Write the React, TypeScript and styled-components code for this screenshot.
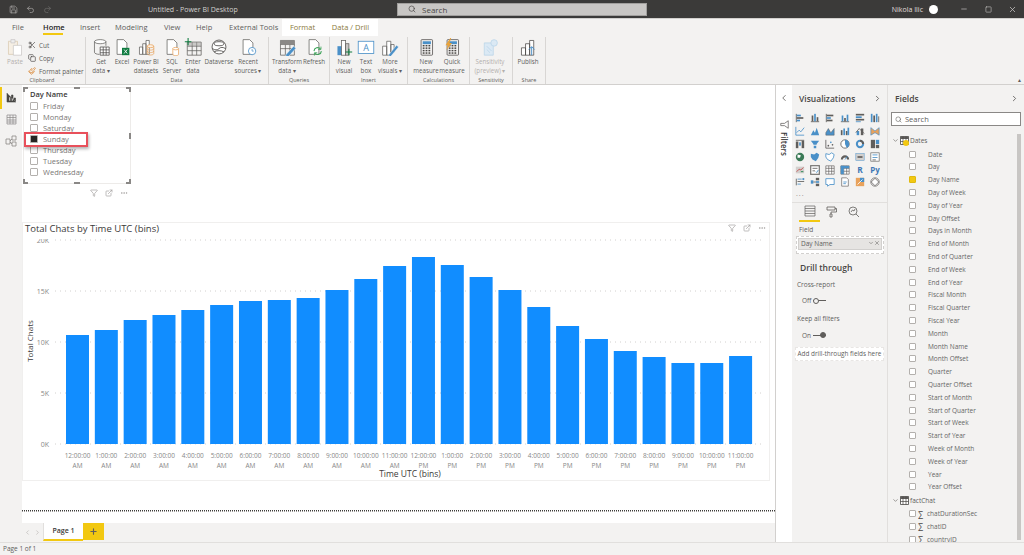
import React from "react";
import styled, { createGlobalStyle } from "styled-components";
import { ChevronDown, ChevronLeft, ChevronRight, Search, X, Filter, Scissors, Copy, Paintbrush, Save, Undo2, Redo2, Minus, Square, ExternalLink, MoreHorizontal, Plus } from "lucide-react";

const Global = createGlobalStyle`
  html, body { margin: 0; padding: 0; width: 1024px; height: 555px; overflow: hidden; }
  body { font-family: "Open Sans", "Liberation Sans", sans-serif; color: #605e5c; }
  * { box-sizing: border-box; }
`;

const Page = styled.div`
  width: 1024px;
  height: 555px;
  display: flex;
  flex-direction: column;
  background: #f3f2f1;
`;

/* title bar */
const TitleBar = styled.div`
  height: 18px;
  background: #3b3a39;
  display: flex;
  align-items: center;
  color: #d2d0ce;
  font-size: 7px;
  flex: none;
`;
const QuickTools = styled.div`
  display: flex;
  align-items: center;
  gap: 8px;
  width: 148px;
  padding-left: 9px;
  color: #a19f9d;
`;
const AppName = styled.div`
  width: 249px;
`;
const TitleSearch = styled.div`
  width: 250px;
  height: 13px;
  background: #c8c6c4;
  border: 1px solid #a19f9d;
  display: flex;
  align-items: center;
  gap: 6px;
  padding-left: 10px;
  color: #484644;
  font-size: 8px;
`;
const UserBox = styled.div`
  margin-left: auto;
  display: flex;
  align-items: center;
  color: #e1dfdd;
`;
const Avatar = styled.div`
  width: 9px;
  height: 9px;
  border-radius: 50%;
  background: #fff;
  margin: 0 14px 0 6px;
`;
const WinBtn = styled.div`
  width: 24px;
  display: flex;
  justify-content: center;
  color: #c8c6c4;
`;

/* ribbon */
const TabRow = styled.div`
  height: 18px;
  display: flex;
  flex: none;
  padding-left: 12px;
  border-top: 1px solid #d2d0ce;
`;
const RibbonTab = styled.div<{ $active?: boolean; $ctx?: boolean; $mr: number; $w: number }>`
  width: ${(p) => p.$w}px;
  margin-right: ${(p) => p.$mr}px;
  font-size: 7.5px;
  line-height: 17px;
  text-align: center;
  white-space: nowrap;
  background: ${(p) => (p.$ctx ? "#fff" : "transparent")};
  color: ${(p) => (p.$ctx ? "#8a7a3c" : p.$active ? "#252423" : "#605e5c")};
  font-weight: ${(p) => (p.$active ? 600 : 400)};
  border-bottom: ${(p) => (p.$active ? "2px solid #f2c811" : "none")};
  height: ${(p) => (p.$active ? "16px" : "17px")};
`;
const Ribbon = styled.div`
  height: 49px;
  display: flex;
  flex: none;
  border-bottom: 1px solid #d2d0ce;
`;
const Group = styled.div<{ $w: number; $pad?: number }>`
  width: ${(p) => p.$w}px;
  border-right: 1px solid #d8d6d4;
  margin: 1px 0 0;
  display: flex;
  flex-direction: column;
  padding-left: ${(p) => p.$pad ?? 4}px;
  flex: none;
`;
const GroupBody = styled.div`
  display: flex;
  flex: 1;
`;
const GroupName = styled.div`
  font-size: 5.5px;
  line-height: 8px;
  text-align: center;
  color: #605e5c;
  margin-left: -4px;
`;
const Cmd = styled.div<{ $w: number; $off?: boolean }>`
  width: ${(p) => p.$w}px;
  display: flex;
  flex-direction: column;
  align-items: center;
  font-size: 6.2px;
  line-height: 8.6px;
  text-align: center;
  white-space: nowrap;
  color: ${(p) => (p.$off ? "#b3b0ad" : "#605e5c")};
  svg { flex: none; }
`;
const CmdIcon = styled.div`
  height: 20px;
  display: flex;
  align-items: center;
  margin-bottom: 1px;
`;
const SmallCmds = styled.div`
  display: flex;
  flex-direction: column;
  gap: 3px;
  padding-top: 3px;
  font-size: 6.4px;
  color: #605e5c;
  margin-left: 1px;
`;
const SmallCmd = styled.div`
  display: flex;
  align-items: center;
  gap: 3px;
  height: 10px;
  white-space: nowrap;
  svg { flex: none; }
`;
const Collapse = styled.div`
  margin-left: auto;
  align-self: flex-end;
  padding: 0 2px 1px 0;
  font-size: 5px;
  color: #605e5c;
`;

/* main */
const Main = styled.div`
  flex: 1;
  display: flex;
  min-height: 0;
`;
const Rail = styled.div`
  width: 22px;
  flex: none;
  padding-top: 2px;
  display: flex;
  flex-direction: column;
`;
const RailBtn = styled.div<{ $active?: boolean }>`
  height: 21.5px;
  display: flex;
  align-items: center;
  justify-content: center;
  border-left: 2px solid ${(p) => (p.$active ? "#f2c811" : "transparent")};
  padding-right: 2px;
`;
const Canvas = styled.div`
  width: 753px;
  flex: none;
  display: flex;
  flex-direction: column;
  background: #fff;
`;
const Sheet = styled.div`
  flex: 1;
  background: #fff;
  padding-top: 2px;
`;
const SlicerFrame = styled.div`
  position: relative;
  width: 108px;
  height: 97px;
  margin-left: 1px;
  padding: 1px 6px;
  border: 1px solid #edebe9;
`;
const SlicerTitle = styled.div`
  font-size: 7.5px;
  font-weight: 600;
  color: #3b3a39;
  line-height: 11px;
`;
const SlicerRow = styled.div`
  height: 11.1px;
  display: flex;
  align-items: center;
  gap: 5px;
  font-size: 7.5px;
  color: #7a7876;
`;
const Check = styled.div<{ $on?: boolean; $size?: number }>`
  width: ${(p) => p.$size ?? 8}px;
  height: ${(p) => p.$size ?? 8}px;
  flex: none;
  border: 1px solid #b3b0ad;
  border-radius: 1px;
  background: ${(p) => (p.$on ? "#252423" : "#fff")};
`;
const Handle = styled.div<{ $x: string; $y: string; $w: number; $h: number }>`
  position: absolute;
  left: ${(p) => p.$x};
  top: ${(p) => p.$y};
  width: ${(p) => p.$w}px;
  height: ${(p) => p.$h}px;
  background: #8a8886;
`;
const Callout = styled.div`
  position: absolute;
  left: 0;
  top: 44px;
  width: 64px;
  height: 15px;
  border: 2px solid #e8505b;
  box-shadow: 1px 2px 3px rgba(0, 0, 0, 0.3);
`;
const VisualTools = styled.div`
  height: 18px;
  width: 108px;
  margin-left: 1px;
  display: flex;
  align-items: center;
  justify-content: flex-end;
  gap: 7px;
  padding-right: 3px;
  color: #a19f9d;
`;
const ChartCard = styled.div`
  margin-top: 20px;
  width: 748px;
  height: 259px;
  border: 1px solid #f0efee;
  position: relative;
`;
const ChartTitle = styled.div`
  font-size: 9.5px;
  line-height: 11px;
  color: #3b3a39;
  padding: 0 0 0 2px;
  height: 16px;
`;
const ChartTools = styled.div`
  position: absolute;
  right: 3px;
  top: 1px;
  display: flex;
  gap: 7px;
  align-items: center;
  color: #a19f9d;
`;
const DottedLine = styled.div`
  margin: 29px 0 0;
  border-top: 1px dotted #3b3a39;
  border-bottom: 1px dotted #a19f9d;
  height: 2px;
`;
const PageStrip = styled.div`
  height: 19px;
  flex: none;
  background: #f3f2f1;
  display: flex;
  align-items: flex-start;
  padding-left: 1px;
  color: #b3b0ad;
`;
const PageNav = styled.div`
  width: 20px;
  height: 18px;
  display: flex;
  align-items: center;
  gap: 3px;
  padding-left: 1px;
`;
const PageTab = styled.div`
  width: 40px;
  height: 18px;
  background: #fff;
  border-bottom: 2px solid #f2c811;
  border-left: 1px solid #e1dfdd;
  font-size: 7px;
  font-weight: 600;
  color: #3b3a39;
  text-align: center;
  line-height: 16px;
`;
const AddPage = styled.div`
  width: 21px;
  height: 17px;
  background: #f2c811;
  display: flex;
  align-items: center;
  justify-content: center;
  color: #605e5c;
`;

/* filters rail */
const FilterRail = styled.div`
  width: 17px;
  flex: none;
  background: #fff;
  border-left: 1px solid #d2d0ce;
  display: flex;
  flex-direction: column;
  align-items: center;
  padding-top: 8px;
  color: #605e5c;
`;
const FilterIcon = styled.svg`
  margin-top: 17px;
  flex: none;
`;
const FiltersLabel = styled.div`
  writing-mode: vertical-rl;
  font-size: 8px;
  font-weight: 600;
  color: #3b3a39;
  margin-top: 3px;
`;

/* visualizations */
const VizPane = styled.div`
  width: 96px;
  flex: none;
  border-right: 1px solid #e1dfdd;
  display: flex;
  flex-direction: column;
`;
const PaneHead = styled.div`
  height: 27px;
  flex: none;
  padding: 0 5px 0 7px;
  display: flex;
  align-items: center;
  justify-content: space-between;
  font-size: 8.5px;
  font-weight: 600;
  color: #484644;
`;
const VizGrid = styled.div`
  display: grid;
  grid-template-columns: repeat(6, 14.9px);
  grid-auto-rows: 12.8px;
  padding-left: 1px;
  justify-items: center;
  align-items: center;
`;
const VizDots = styled.div`
  font-size: 7px;
  line-height: 6px;
  letter-spacing: 1px;
  padding: 2px 0 0 4px;
  height: 14px;
  border-bottom: 1px solid #e1dfdd;
  color: #8a8886;
`;
const VizTabs = styled.div`
  display: flex;
  height: 19px;
  padding-left: 7px;
  gap: 1px;
`;
const VizTab = styled.div<{ $active?: boolean }>`
  width: 21px;
  display: flex;
  align-items: center;
  justify-content: center;
  border-bottom: ${(p) => (p.$active ? "2px solid #f2c811" : "none")};
`;
const WellLabel = styled.div`
  font-size: 6.5px;
  padding: 3px 0 0 7px;
  line-height: 9px;
`;
const Well = styled.div`
  margin: 2px 3px 0 4px;
  padding: 1px;
  border: 1px dashed #d2d0ce;
  background: #fff;
  height: 18px;
`;
const Chip = styled.div`
  height: 12px;
  background: #e6e4e2;
  border: 1px solid #d2d0ce;
  font-size: 6.5px;
  line-height: 10px;
  padding: 0 1px 0 2px;
  display: flex;
  align-items: center;
  justify-content: space-between;
`;
const DrillHead = styled.div`
  font-size: 8.5px;
  font-weight: 600;
  color: #484644;
  padding: 8px 0 0 8px;
  line-height: 12px;
`;
const Caption = styled.div<{ $top: number }>`
  font-size: 6.5px;
  line-height: 9px;
  padding: ${(p) => p.$top}px 0 0 5px;
`;
const ToggleRow = styled.div`
  display: flex;
  align-items: center;
  gap: 2px;
  font-size: 6.5px;
  padding: 7.5px 0 0 10px;
  line-height: 9px;
`;
const Toggle = styled.div<{ $on?: boolean }>`
  width: 13px;
  height: 5px;
  display: flex;
  align-items: center;
  justify-content: ${(p) => (p.$on ? "flex-end" : "flex-start")};
  background: linear-gradient(#605e5c, #605e5c) center / 100% 1px no-repeat;
  span {
    width: 6px;
    height: 6px;
    flex: none;
    border-radius: 50%;
    border: 1px solid #605e5c;
    background: ${(p) => (p.$on ? "#605e5c" : "#f3f2f1")};
  }
`;
const DrillBtn = styled.div`
  margin: 7px 3px 0 3px;
  height: 14px;
  background: #fff;
  border: 1px dashed #e8e6e4;
  font-size: 6.4px;
  line-height: 12px;
  text-align: center;
  white-space: nowrap;
`;

/* fields */
const FieldsPane = styled.div`
  flex: 1;
  display: flex;
  flex-direction: column;
  min-width: 0;
  position: relative;
`;
const FieldSearch = styled.div`
  margin: 0 3px;
  height: 14px;
  flex: none;
  background: #fff;
  border: 1px solid #8a8886;
  display: flex;
  align-items: center;
  gap: 3px;
  padding-left: 3px;
  font-size: 7.5px;
`;
const Tree = styled.div`
  padding-top: 8px;
  height: 416px;
  overflow: hidden;
`;
const TreeHead = styled.div`
  height: 13.8px;
  display: flex;
  align-items: center;
  gap: 1px;
  padding-left: 4px;
  font-size: 6.5px;
  position: relative;
`;
const TreeItem = styled.div`
  height: 12.8px;
  display: flex;
  align-items: center;
  padding-left: 21px;
  font-size: 6.5px;
  white-space: nowrap;
  color: #666;
`;
const ItemLabel = styled.span<{ $sigma?: boolean }>`
  margin-left: ${(p) => (p.$sigma ? 2 : 12)}px;
`;
const Sigma = styled.span`
  font-size: 8px;
  line-height: 8px;
  margin-left: 2px;
  width: 7px;
  color: #484644;
`;
const ScrollThumb = styled.div`
  position: absolute;
  right: 3px;
  top: 49px;
  width: 4px;
  height: 406px;
  background: #c8c6c4;
`;
const YellowDot = styled.div`
  position: absolute;
  left: 15px;
  top: 6px;
  width: 6px;
  height: 6px;
  border-radius: 50%;
  background: #f2c811;
`;
const StatusBar = styled.div`
  height: 13px;
  flex: none;
  border-top: 1px solid #e1dfdd;
  font-size: 6.5px;
  line-height: 12px;
  padding-left: 3px;
`;

const G = "#605e5c";
const B = "#4a90c8";
const O = "#e8a25c";

const RibbonGlyph: React.FC<{ kind: string }> = ({ kind }) => {
  const doc = <path d="M5 2h8l4 4v14H5z" fill="#fff" stroke={G} strokeWidth="0.9" />;
  const inner = () => {
    switch (kind) {
      case "paste":
        return (
          <g strokeWidth="0.9" fill="#f6efe4" stroke="#d8c8ae">
            <path d="M3 4h11v16H3z" />
            <path d="M6 2h5v4H6z" fill="#eee" stroke="#c8c6c4" />
            <path d="M9 9h10v12H9z" fill="#fff" stroke="#c8c6c4" />
          </g>
        );
      case "getdata":
        return (
          <g strokeWidth="0.9" stroke={G} fill="#fff">
            <ellipse cx="10" cy="4.5" rx="7" ry="2.5" />
            <path d="M3 4.5v13c0 1.5 3 2.5 6 2.5M17 4.5v5" fill="none" />
            <path d="M10 11h11v10H10zM10 14.5h11M10 18h11M13.7 11v10M17.3 11v10" stroke="#484644" fill="#fff" />
          </g>
        );
      case "excel":
        return (
          <g>
            {doc}
            <rect x="11" y="12" width="9" height="9" fill="#107c41" />
            <path d="M13.5 14l4 5M17.5 14l-4 5" stroke="#fff" strokeWidth="1" />
          </g>
        );
      case "datasets":
        return (
          <g strokeWidth="0.9" fill="#fff" stroke={G}>
            <path d="M3 11h4v9H3zM7 7h4v13H7zM11 3h4v17h-4z" />
            <g stroke={O}>
              <ellipse cx="16.5" cy="10" rx="4" ry="1.8" fill="#fdf1e3" />
              <path d="M12.5 10v9c0 1 1.8 1.8 4 1.8s4-.8 4-1.8v-9M12.5 13c0 1 1.8 1.8 4 1.8s4-.8 4-1.8M12.5 16c0 1 1.8 1.8 4 1.8s4-.8 4-1.8" fill="none" />
            </g>
          </g>
        );
      case "sql":
        return (
          <g>
            {doc}
            <g stroke={O} strokeWidth="0.9" fill="#fff">
              <path d="M12 13v7c0 1 1.6 1.5 3.5 1.5S19 21 19 20v-7" />
              <ellipse cx="15.5" cy="13" rx="3.5" ry="1.5" />
            </g>
          </g>
        );
      case "enter":
        return (
          <g strokeWidth="0.9" fill="none">
            <path d="M4 5h17v16H4zM4 10h17M4 15.500h17M10 5v16M15.500 5v16" stroke={G} />
            <path d="M4 5h17v5H4z" fill="#a19f9d" opacity=".5" />
            <path d="M5 0v9M1 4.500h8" stroke="#107c41" strokeWidth="1.3" />
          </g>
        );
      case "dataverse":
        return (
          <g strokeWidth="1" stroke="#484644" fill="#fff">
            <ellipse cx="11" cy="11" rx="8.500" ry="8.500" />
            <ellipse cx="11" cy="7" rx="6" ry="2.500" />
            <path d="M3 13c3 2 6 2 8 0s5-2 8 0M5 17c3-2 9-2 12 0" fill="none" />
          </g>
        );
      case "recent":
        return (
          <g>
            {doc}
            <circle cx="16" cy="16" r="4.500" fill="#fff" stroke={B} />
            <path d="M16 13.500V16h2" stroke={B} fill="none" strokeWidth="0.9" />
          </g>
        );
      case "transform":
        return (
          <g fill="none" strokeWidth="0.9">
            <path d="M3 3h17v18H3zM3 8h17M3 13h17M9 8v13M14.500 8v13" stroke={G} />
            <path d="M3 3h17v5H3z" fill="#8a8886" />
            <path d="M10 20l9-10 3 2.500-9 10-4 1z" fill={B} stroke="#fff" strokeWidth="0.6" />
          </g>
        );
      case "refresh":
        return (
          <g>
            {doc}
            <path d="M11 16a4.500 4.500 0 0 1 8-2.500M20 16a4.500 4.500 0 0 1-8 2.500" stroke="#3fa45b" strokeWidth="1.3" fill="none" />
            <path d="M19.500 10.500v3.500h-3.500M11.500 21.500V18H15" stroke="#3fa45b" strokeWidth="1" fill="none" />
          </g>
        );
      case "newvisual":
        return (
          <g strokeWidth="0.9">
            <rect x="3" y="10" width="5" height="11" fill={B} />
            <rect x="8" y="3" width="5" height="18" fill="#fff" stroke={G} />
            <rect x="13" y="7" width="4" height="14" fill="#c8c6c4" stroke={G} />
            <path d="M17 13v8M13 17h8" stroke="#107c41" strokeWidth="1.3" />
          </g>
        );
      case "textbox":
        return (
          <g>
            <rect x="1.500" y="4" width="19" height="15" fill="#fff" stroke={B} />
            <text x="11" y="16" fontSize="11" textAnchor="middle" fill={B} fontFamily="Open Sans">A</text>
          </g>
        );
      case "morevisuals":
        return (
          <g strokeWidth="0.9" stroke={G} fill="#fff">
            <path d="M2 10h5v11H2zM7 4h5v17H7zM12 8h4v9h-4z" />
            <path d="M9 21l10-12 2.500 2L11.500 23z" fill={B} stroke="#fff" strokeWidth="0.5" />
          </g>
        );
      case "newmeasure":
      case "quickmeasure":
        return (
          <g>
            <rect x="5" y="2" width="14" height="19" rx="1" fill="#f3f2f1" stroke="#484644" strokeWidth="0.9" />
            <rect x="7" y="4" width="10" height="3.500" fill={B} />
            <g fill="#484644">
              {[9, 12, 15, 18].flatMap((y) =>
                [7, 10.500, 14].map((x) => <rect key={`${x}-${y}`} x={x} y={y - 0.500} width="2.200" height="1.800" />)
              )}
            </g>
            {kind === "quickmeasure" && <path d="M9 0L3 9h3l-2 6 7-9H8l2-6z" fill="#e8a33c" />}
          </g>
        );
      case "sensitivity":
        return (
          <g fill="#dbe9f4" stroke="#b7d3e8" strokeWidth="0.9">
            <path d="M4 6h11v15H4z" />
            <circle cx="16" cy="6" r="4" />
            <path d="M7 10l6 6M7 14l4 4" fill="none" />
          </g>
        );
      default:
        return (
          <g strokeWidth="0.9" stroke="#484644" fill="#fff">
            <path d="M3 12h5v9H3zM8 7h5v14H8zM13 3h5v18h-5z" />
            <path d="M15.500 21V11M12 14l3.500-3.500L19 14" stroke={B} strokeWidth="1.2" fill="none" />
          </g>
        );
    }
  };
  return (
    <svg width="18" height="18" viewBox="0 0 22 22">
      {inner()}
    </svg>
  );
};

const vizKinds = [
  "hstack", "vstack", "hbar", "vbar", "hfull", "vfull",
  "line", "area", "lines", "combo", "combo2", "ribbon",
  "water", "funnel", "scatter", "pie", "donut", "tree",
  "map", "filled", "shape", "gauge", "card", "multi",
  "kpi", "slicer", "table", "matrix", "R", "Py",
  "key", "decomp", "qa", "para", "paginated", "diamond",
];

const VizGlyph: React.FC<{ kind: string }> = ({ kind }) => {
  const bars = (items: number[][], fill = G) =>
    items.map((r, i) => <rect key={i} x={r[0]} y={r[1]} width={r[2]} height={r[3]} fill={r[4] ? B : fill} />);
  const shapes: Record<string, React.ReactNode> = {
    hstack: bars([[1, 1, 1, 10], [2, 2, 5, 2, 1], [2, 5, 8, 2], [2, 8, 4, 2, 1]]),
    vstack: bars([[1, 10, 10, 1], [2, 3, 2, 7], [5, 1, 2, 9, 1], [8, 5, 2, 5]]),
    hbar: bars([[1, 1, 1, 10], [2, 2, 8, 2], [2, 5, 5, 2, 1], [2, 8, 7, 2]]),
    vbar: bars([[1, 10, 10, 1], [2, 3, 2, 7, 1], [5, 6, 2, 4], [8, 2, 2, 8, 1]]),
    hfull: bars([[1, 1, 10, 2], [1, 4, 7, 2, 1], [1, 7, 10, 2], [1, 10, 6, 1, 1]]),
    vfull: bars([[1, 1, 2, 10, 1], [4, 3, 2, 8], [7, 1, 2, 10, 1], [10, 4, 1, 7]]),
    line: <path d="M1 1v10h10M2 8l3-3 2 2 4-5" fill="none" stroke={B} strokeWidth="1" />,
    area: <path d="M1 11l3-6 2 3 2-6 3 9z" fill={B} />,
    lines: <path d="M1 8l3-5 3 5 4-5v8H1z" fill={B} stroke={G} strokeWidth=".6" />,
    combo: <g>{bars([[1, 5, 2, 6], [4, 3, 2, 8, 1], [7, 6, 2, 5], [9, 2, 2, 9, 1]])}</g>,
    combo2: <g>{bars([[2, 6, 3, 5, 1], [7, 3, 3, 8]])}<path d="M1 8l4-5 6 6" stroke={G} fill="none" /></g>,
    ribbon: <path d="M1 2l5 4 5-4v9l-5-3-5 3z" fill="#e8a25c" stroke={B} strokeWidth=".8" />,
    water: bars([[1, 1, 10, 1], [1, 3, 3, 8], [5, 4, 2, 4, 1], [8, 2, 3, 9]]),
    funnel: <path d="M1 2h10L8 6v1H4V6zM4.500 8h3v3h-3z" fill={B} />,
    scatter: <g fill={G}><path d="M1 1v10h10" stroke={G} fill="none" /><circle cx="4" cy="8" r="1" /><circle cx="7" cy="4" r="1" fill={B} /><circle cx="9" cy="7" r="1" /></g>,
    pie: <g><circle cx="6" cy="6" r="5" fill="#fff" stroke={G} /><path d="M6 6V1a5 5 0 0 1 2 9.600z" fill={B} /></g>,
    donut: <g><circle cx="6" cy="6" r="3.800" fill="none" stroke={B} strokeWidth="2.400" /><path d="M6 2.200a3.800 3.800 0 0 1 3.800 3.800" stroke={G} strokeWidth="2.400" fill="none" /></g>,
    tree: bars([[1, 1, 5, 10], [7, 1, 4, 5, 1], [7, 7, 4, 4]]),
    map: <g><circle cx="6" cy="6" r="5" fill="#3b7a57" /><path d="M3 3l4 1-1 3-3 0z" fill="#fff" /></g>,
    filled: <path d="M1 2l4 1 3-2 3 2-1 4-3 4-4-2-2-3z" fill={B} />,
    shape: <path d="M1 2l4 1 3-2 3 2-1 4-3 4-4-2-2-3z" fill="#fff" stroke={B} />,
    gauge: <g><path d="M1 9a5 5 0 0 1 10 0h-2.500a2.500 2.500 0 0 0-5 0z" fill={G} /><path d="M6 9l3-4" stroke={B} /></g>,
    card: <g><rect x="1" y="2" width="10" height="8" fill="#d2d0ce" stroke={B} strokeWidth=".6" /><rect x="3" y="5" width="6" height="2" fill={G} /></g>,
    multi: <g><rect x="1" y="1" width="10" height="10" fill="#fff" stroke={G} strokeWidth=".8" />{bars([[3, 3, 6, 1, 1], [3, 6, 6, 1, 1], [3, 9, 4, 1]])}</g>,
    kpi: <g><rect x="1" y="2" width="10" height="8" fill="#d2d0ce" /><path d="M2 8l3-3 2 1 3-3" stroke="#c43e3e" fill="none" /><path d="M7 8h3" stroke="#107c41" /></g>,
    slicer: <g><rect x="-1" y="-1" width="14" height="14" fill="#a19f9d" /><rect x="1" y="1" width="10" height="10" fill="#fff" stroke={G} /><path d="M3 4h6M3 7h3" stroke={G} /><path d="M7 8l1 1 2-3" stroke={B} fill="none" /></g>,
    table: <path d="M1 1h10v10H1zM1 4h10M1 7.500h10M4.500 1v10M8 1v10" fill="#fff" stroke={G} strokeWidth=".8" />,
    matrix: <g><path d="M1 1h10v10H1zM1 4h10M1 7.500h10M4.500 1v10M8 1v10" fill="#fff" stroke={G} strokeWidth=".8" /><path d="M1 1h10v3H1z" fill={B} /><path d="M1 1h3.500v10H1z" fill={B} /></g>,
    R: <text x="6" y="10" fontSize="10" fontWeight="700" textAnchor="middle" fill="#3f78b5" fontFamily="Open Sans">R</text>,
    Py: <text x="6" y="10" fontSize="9.500" fontWeight="700" textAnchor="middle" fill="#3f78b5" fontFamily="Open Sans">Py</text>,
    key: <g>{bars([[1, 2, 1, 8], [3, 2, 5, 1, 1], [3, 5, 8, 1], [3, 8, 4, 1, 1]])}<circle cx="10" cy="2.500" r="1.300" fill={B} /></g>,
    decomp: <g>{bars([[1, 4, 3, 4, 1], [7, 1, 4, 3], [7, 5, 4, 2, 1], [7, 8, 4, 3]])}<path d="M4 6h3" stroke={G} /></g>,
    qa: <path d="M1 2h10v7H6l-3 2V9H1z" fill="#fff" stroke={B} />,
    para: <g><path d="M2 1h6l2 2v8H2z" fill="#fff" stroke={G} strokeWidth=".8" /><path d="M4 6h4M4 8h3" stroke={B} /></g>,
    paginated: <g><rect x="1" y="1" width="10" height="10" fill="#e8a25c" /><path d="M6 1h5v5H6z" fill={B} /><path d="M3 9l6-6" stroke="#fff" /></g>,
    diamond: <g fill="#fff" stroke="#484644" strokeWidth=".8"><circle cx="6" cy="6" r="5" /><path d="M6 1.500L10.500 6 6 10.500 1.500 6z" /></g>,
  };
  return (
    <svg width="10" height="10" viewBox="0 0 12 12">
      {shapes[kind]}
    </svg>
  );
};

const TableIcon: React.FC = () => (
  <svg width="9" height="9" viewBox="0 0 9 9">
    <path d="M.5.500h8v8h-8z" fill="#fff" stroke="#484644" strokeWidth=".8" />
    <path d="M.5.500h8V3h-8z" fill="#605e5c" />
    <path d="M.5 5.500h8M3 .500v8M6 .500v8" stroke="#484644" strokeWidth=".7" />
  </svg>
);

const values = [335, 330, 320, 315, 310, 305, 301, 300, 298, 290, 279, 266, 257, 265, 277, 290, 307, 326, 339, 351, 357, 363, 363, 356];
const hours = ["12", "1", "2", "3", "4", "5", "6", "7", "8", "9", "10", "11"];
const xLabels = [...hours.map((h) => [`${h}:00:00`, "AM"]), ...hours.map((h) => [`${h}:00:00`, "PM"])];
const days = ["Friday", "Monday", "Saturday", "Sunday", "Thursday", "Tuesday", "Wednesday"];
const dateFields = [
  "Date", "Day", "Day Name", "Day of Week", "Day of Year", "Day Offset", "Days in Month", "End of Month", "End of Quarter",
  "End of Week", "End of Year", "Fiscal Month", "Fiscal Quarter", "Fiscal Year", "Month", "Month Name", "Month Offset",
  "Quarter", "Quarter Offset", "Start of Month", "Start of Quarter", "Start of Week", "Start of Year", "Week of Month",
  "Week of Year", "Year", "Year Offset",
];

const Chart: React.FC = () => (
  <svg width="746" height="241" viewBox="23 239 746 241">
    {[
      ["20K", 240],
      ["15K", 291],
      ["10K", 342],
      ["5K", 393],
      ["0K", 444],
    ].map(([label, y]) => (
      <g key={label}>
        <line x1="55" x2="765" y1={y} y2={y} stroke="#d2d0ce" strokeWidth="1" strokeDasharray="1 4" />
        <text x="49" y={Number(y) + 3} textAnchor="end" fontSize="7" fill="#888">{label}</text>
      </g>
    ))}
    {values.map((top, i) => (
      <rect key={i} x={66 + i * 28.83} y={top} width={23} height={444 - top} fill="#118dff" />
    ))}
    {xLabels.map(([a, b], i) => (
      <text key={i} textAnchor="middle" fontSize="6.500" fill="#888">
        <tspan x={77.500 + i * 28.83} y="458">{a}</tspan>
        <tspan x={77.500 + i * 28.83} y="468">{b}</tspan>
      </text>
    ))}
    <text x="410" y="477" textAnchor="middle" fontSize="8.500" fill="#3b3a39">Time UTC (bins)</text>
    <text transform="translate(33 341) rotate(-90)" textAnchor="middle" fontSize="8" fill="#3b3a39">Total Chats</text>
  </svg>
);

export default function App() {
  return (
    <Page>
      <Global />
      <TitleBar>
        <QuickTools>
          <Save size={9} />
          <Undo2 size={9} />
          <Redo2 size={9} color="#6a6867" />
        </QuickTools>
        <AppName>Untitled - Power BI Desktop</AppName>
        <TitleSearch>
          <Search size={8} />
          Search
        </TitleSearch>
        <UserBox>
          Nikola Ilic
          <Avatar />
          <WinBtn><Minus size={8} /></WinBtn>
          <WinBtn><Square size={7} /></WinBtn>
          <WinBtn><X size={9} /></WinBtn>
        </UserBox>
      </TitleBar>
      <TabRow>
        <RibbonTab $w={11} $mr={20}>File</RibbonTab>
        <RibbonTab $w={20} $mr={17} $active>Home</RibbonTab>
        <RibbonTab $w={18} $mr={17}>Insert</RibbonTab>
        <RibbonTab $w={32} $mr={17}>Modeling</RibbonTab>
        <RibbonTab $w={16} $mr={16}>View</RibbonTab>
        <RibbonTab $w={16} $mr={17}>Help</RibbonTab>
        <RibbonTab $w={44} $mr={9}>External Tools</RibbonTab>
        <RibbonTab $w={41} $mr={0} $ctx>Format</RibbonTab>
        <RibbonTab $w={55} $mr={0} $ctx>Data / Drill</RibbonTab>
      </TabRow>
      <Ribbon>
        <Group $w={86} $pad={3}>
          <GroupBody>
            <Cmd $w={24} $off>
              <CmdIcon><RibbonGlyph kind="paste" /></CmdIcon>
              Paste
            </Cmd>
            <SmallCmds>
              <SmallCmd><Scissors size={8} color="#484644" />Cut</SmallCmd>
              <SmallCmd><Copy size={8} color="#484644" />Copy</SmallCmd>
              <SmallCmd><Paintbrush size={8} color="#d9822b" />Format painter</SmallCmd>
            </SmallCmds>
          </GroupBody>
          <GroupName>Clipboard</GroupName>
        </Group>
        <Group $w={183} $pad={3}>
          <GroupBody>
            <Cmd $w={24}><CmdIcon><RibbonGlyph kind="getdata" /></CmdIcon>Get<br />data ▾</Cmd>
            <Cmd $w={18}><CmdIcon><RibbonGlyph kind="excel" /></CmdIcon>Excel</Cmd>
            <Cmd $w={30}><CmdIcon><RibbonGlyph kind="datasets" /></CmdIcon>Power BI<br />datasets</Cmd>
            <Cmd $w={22}><CmdIcon><RibbonGlyph kind="sql" /></CmdIcon>SQL<br />Server</Cmd>
            <Cmd $w={20}><CmdIcon><RibbonGlyph kind="enter" /></CmdIcon>Enter<br />data</Cmd>
            <Cmd $w={32}><CmdIcon><RibbonGlyph kind="dataverse" /></CmdIcon>Dataverse</Cmd>
            <Cmd $w={26}><CmdIcon><RibbonGlyph kind="recent" /></CmdIcon>Recent<br />sources ▾</Cmd>
          </GroupBody>
          <GroupName>Data</GroupName>
        </Group>
        <Group $w={61}>
          <GroupBody>
            <Cmd $w={28}><CmdIcon><RibbonGlyph kind="transform" /></CmdIcon>Transform<br />data ▾</Cmd>
            <Cmd $w={26}><CmdIcon><RibbonGlyph kind="refresh" /></CmdIcon>Refresh</Cmd>
          </GroupBody>
          <GroupName>Queries</GroupName>
        </Group>
        <Group $w={78}>
          <GroupBody>
            <Cmd $w={20}><CmdIcon><RibbonGlyph kind="newvisual" /></CmdIcon>New<br />visual</Cmd>
            <Cmd $w={24}><CmdIcon><RibbonGlyph kind="textbox" /></CmdIcon>Text<br />box</Cmd>
            <Cmd $w={24}><CmdIcon><RibbonGlyph kind="morevisuals" /></CmdIcon>More<br />visuals ▾</Cmd>
          </GroupBody>
          <GroupName>Insert</GroupName>
        </Group>
        <Group $w={62}>
          <GroupBody>
            <Cmd $w={28}><CmdIcon><RibbonGlyph kind="newmeasure" /></CmdIcon>New<br />measure</Cmd>
            <Cmd $w={24}><CmdIcon><RibbonGlyph kind="quickmeasure" /></CmdIcon>Quick<br />measure</Cmd>
          </GroupBody>
          <GroupName>Calculations</GroupName>
        </Group>
        <Group $w={43}>
          <GroupBody>
            <Cmd $w={32} $off><CmdIcon><RibbonGlyph kind="sensitivity" /></CmdIcon>Sensitivity<br />(preview) ▾</Cmd>
          </GroupBody>
          <GroupName>Sensitivity</GroupName>
        </Group>
        <Group $w={33}>
          <GroupBody>
            <Cmd $w={22}><CmdIcon><RibbonGlyph kind="publish" /></CmdIcon>Publish</Cmd>
          </GroupBody>
          <GroupName>Share</GroupName>
        </Group>
        <Collapse>▲</Collapse>
      </Ribbon>
      <Main>
        <Rail>
          <RailBtn $active>
            <svg width="11" height="11" viewBox="0 0 11 11">
              <path d="M1 1v9h9M3 9V5h1.500v4zM5.500 9V3H7v6zM8 9V6h1.500v3z" fill="#484644" stroke="#484644" strokeWidth=".6" />
            </svg>
          </RailBtn>
          <RailBtn>
            <svg width="11" height="11" viewBox="0 0 11 11">
              <path d="M1 1h9v9H1zM1 3.500h9M1 6h9M1 8h9M4 1v9M7 1v9" fill="none" stroke="#8a8886" strokeWidth=".7" />
            </svg>
          </RailBtn>
          <RailBtn>
            <svg width="12" height="12" viewBox="0 0 12 12">
              <path d="M1 4h4v5H1zM7 1h4v4H7zM7 7h4v4H7zM5 6l2-2M5 7l2 2" fill="none" stroke="#8a8886" strokeWidth=".8" />
            </svg>
          </RailBtn>
        </Rail>
        <Canvas>
          <Sheet>
            <SlicerFrame>
              <SlicerTitle>Day Name</SlicerTitle>
              {days.map((d) => (
                <SlicerRow key={d}>
                  <Check $on={d === "Sunday"} />
                  {d}
                </SlicerRow>
              ))}
              <Callout />
              <Handle $x="-1px" $y="-1px" $w={5} $h={2} />
              <Handle $x="-1px" $y="-1px" $w={2} $h={5} />
              <Handle $x="calc(100% - 4px)" $y="-1px" $w={5} $h={2} />
              <Handle $x="calc(100% - 1px)" $y="-1px" $w={2} $h={5} />
              <Handle $x="-1px" $y="calc(100% - 1px)" $w={5} $h={2} />
              <Handle $x="-1px" $y="calc(100% - 4px)" $w={2} $h={5} />
              <Handle $x="calc(100% - 4px)" $y="calc(100% - 1px)" $w={5} $h={2} />
              <Handle $x="calc(100% - 1px)" $y="calc(100% - 4px)" $w={2} $h={5} />
              <Handle $x="calc(100% - 1px)" $y="calc(50% - 3px)" $w={2} $h={6} />
              <Handle $x="calc(50% - 3px)" $y="-1px" $w={6} $h={2} />
              <Handle $x="calc(50% - 3px)" $y="calc(100% - 1px)" $w={6} $h={2} />
            </SlicerFrame>
            <VisualTools>
              <Filter size={8} />
              <ExternalLink size={8} />
              <MoreHorizontal size={8} />
            </VisualTools>
            <ChartCard>
              <ChartTitle>Total Chats by Time UTC (bins)</ChartTitle>
              <ChartTools>
                <Filter size={8} />
                <ExternalLink size={8} />
                <MoreHorizontal size={8} />
              </ChartTools>
              <Chart />
            </ChartCard>
            <DottedLine />
          </Sheet>
          <PageStrip>
            <PageNav>
              <ChevronLeft size={7} />
              <ChevronRight size={7} />
            </PageNav>
            <PageTab>Page 1</PageTab>
            <AddPage><Plus size={9} strokeWidth={3} /></AddPage>
          </PageStrip>
        </Canvas>
        <FilterRail>
          <ChevronLeft size={10} />
          <FilterIcon width="9" height="9" viewBox="0 0 12 12">
            <path d="M11 1v10L6 7.500H1v-3h5z" fill="none" stroke="#605e5c" />
          </FilterIcon>
          <FiltersLabel>Filters</FiltersLabel>
        </FilterRail>
        <VizPane>
          <PaneHead>
            Visualizations
            <ChevronRight size={9} />
          </PaneHead>
          <VizGrid>
            {vizKinds.map((k) => (
              <VizGlyph key={k} kind={k} />
            ))}
          </VizGrid>
          <VizDots>...</VizDots>
          <VizTabs>
            <VizTab $active>
              <svg width="12" height="12" viewBox="0 0 12 12">
                <path d="M1 1h10v10H1zM1 3.500h10M1 6h10M1 8.500h10" fill="none" stroke="#605e5c" strokeWidth=".7" />
              </svg>
            </VizTab>
            <VizTab>
              <svg width="11" height="12" viewBox="0 0 11 12">
                <path d="M1 1h8v3H1zM9 2.500h1.500V6H5v2M4 8h2v3H4z" fill="none" stroke="#605e5c" strokeWidth=".8" />
              </svg>
            </VizTab>
            <VizTab>
              <svg width="12" height="12" viewBox="0 0 12 12">
                <circle cx="5" cy="5" r="4" fill="none" stroke="#605e5c" strokeWidth=".8" />
                <path d="M8 8l3 3M3 6l1.500-2L6 5l1-2" fill="none" stroke="#605e5c" strokeWidth=".8" />
              </svg>
            </VizTab>
          </VizTabs>
          <WellLabel>Field</WellLabel>
          <Well>
            <Chip>
              Day Name
              <span>
                <ChevronDown size={6} />
                <X size={6} />
              </span>
            </Chip>
          </Well>
          <DrillHead>Drill through</DrillHead>
          <Caption $top={6}>Cross-report</Caption>
          <ToggleRow>
            Off
            <Toggle><span /></Toggle>
          </ToggleRow>
          <Caption $top={9}>Keep all filters</Caption>
          <ToggleRow>
            On
            <Toggle $on><span /></Toggle>
          </ToggleRow>
          <DrillBtn>Add drill-through fields here</DrillBtn>
        </VizPane>
        <FieldsPane>
          <PaneHead>
            Fields
            <ChevronRight size={9} />
          </PaneHead>
          <FieldSearch>
            <Search size={7} />
            Search
          </FieldSearch>
          <Tree>
            <TreeHead>
              <ChevronDown size={7} />
              <TableIcon />
              <YellowDot />
              Dates
            </TreeHead>
            {dateFields.map((f) => (
              <TreeItem key={f}>
                <Check $size={7} style={f === "Day Name" ? { background: "#f2c811", borderColor: "#e0b90f" } : undefined} />
                <ItemLabel>{f}</ItemLabel>
              </TreeItem>
            ))}
            <TreeHead>
              <ChevronDown size={7} />
              <TableIcon />
              factChat
            </TreeHead>
            {["chatDurationSec", "chatID", "countryID"].map((f) => (
              <TreeItem key={f}>
                <Check $size={7} />
                <Sigma>∑</Sigma>
                <ItemLabel $sigma>{f}</ItemLabel>
              </TreeItem>
            ))}
          </Tree>
          <ScrollThumb />
        </FieldsPane>
      </Main>
      <StatusBar>Page 1 of 1</StatusBar>
    </Page>
  );
}
